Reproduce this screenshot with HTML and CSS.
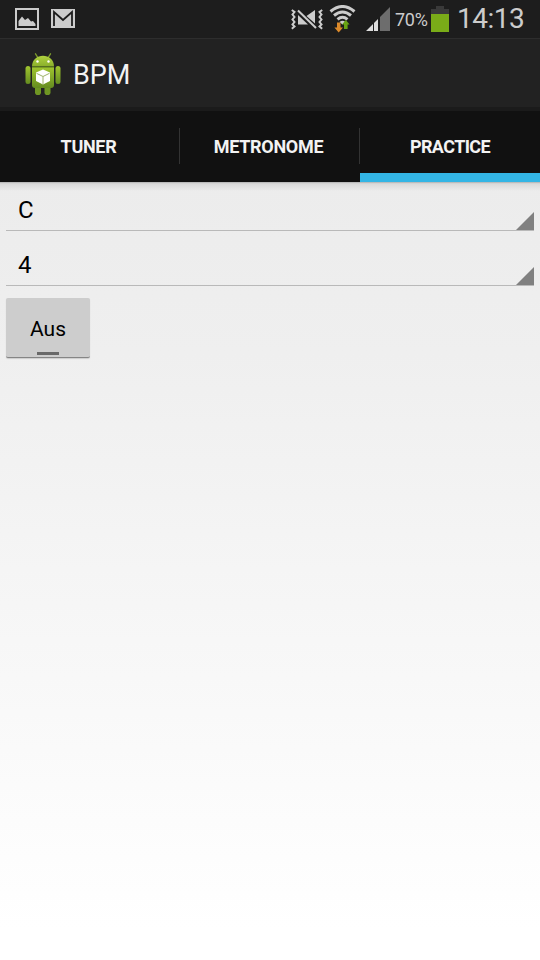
FILE: index.html
```
<!DOCTYPE html>
<html lang="de">
<head>
<meta charset="utf-8">
<title>BPM</title>
<link rel="stylesheet" href="styles.css">
</head>
<body>
<div class="screen">
  <header class="status">
    <div class="notices">
      <svg class="notice" width="24" height="22" viewBox="0 0 24 22"><path d="M1 1h22v20H1z" fill="none" stroke="#ccc" stroke-width="2"/><path d="M3.500 18v-5L7 8.500l3 3.500 3-2 3 3.500 2-.5 2.500 3v2z" fill="#ccc"/></svg>
      <svg class="notice gmail" width="24" height="19" viewBox="0 0 24 19"><path d="M0 0h24v19H0z" fill="#ccc"/><path d="M3 17V3l9 8 9-8v14" fill="none" stroke="#1d1d1d" stroke-width="1.800"/></svg>
    </div>
    <div class="system">
      <svg class="mute" width="32" height="24" viewBox="0 0 32 24"><path d="M.8 3l2.700 2-2 2.500 2 2.500-2 2.500 2 2.500-2 2.500 2 2-2.700 2.200M31.200 3l-2.700 2 2 2.500-2 2.500 2 2.500-2 2.500 2 2.500-2 2 2.700 2.200" fill="none" stroke="#ccc" stroke-width="2"/><path d="M7 8l10 9.500H7zM15.500 9L24 3v13.500z" fill="#ccc"/><path d="M7 3.500l18 17.500" stroke="#ccc" stroke-width="2"/></svg>
      <svg class="wifi" width="28" height="28" viewBox="0 0 28 28"><g fill="none" stroke="#ccc" stroke-width="3"><path d="M1.500 6.500Q13.500-3.500 25.500 6.500"/><path d="M5 10.500Q13.500 3.500 22 10.500"/><path d="M8.500 14.300Q13.500 10.300 18.500 14.300"/></g><path d="M10.500 17q3-2.500 6 0l-3 2.500z" fill="#ccc"/><path d="M8 17.500h3.500v5h2.500l-4.300 5-4.300-5H8z" fill="#dc8a2b"/><path d="M15 24v-4.500h-2L16.800 15l3.800 4.500h-2V24z" fill="#69a313"/></svg>
      <svg class="signal" width="24" height="24" viewBox="0 0 24 24"><path d="M0 24l7-7v7zM8 24v-8l4-4v12z" fill="#ddd"/><path d="M14 24V10L24 0v24z" fill="#6d6d6d"/></svg>
      <span class="percent">70%</span>
      <svg class="battery" width="18" height="26" viewBox="0 0 18 26"><path d="M0 3h5V0h8v3h5v5H0z" fill="#3a3a3a"/><path d="M0 8h18v18H0z" fill="#7aac18"/></svg>
      <span class="clock">14:13</span>
    </div>
  </header>
  <div class="appbar">
    <svg class="logo" width="36" height="43" viewBox="0 0 36 43">
      <defs>
        <linearGradient id="body" x2="0" y2="1"><stop stop-color="#a0c52f"/><stop offset="1" stop-color="#658c20"/></linearGradient>
        <linearGradient id="head" x2="0" y2="1"><stop stop-color="#b0d23f"/><stop offset="1" stop-color="#8aaf2b"/></linearGradient>
      </defs>
      <path d="M10.500.800l2.500 4M25.500.800l-2.500 4" stroke="#7d9c2c" stroke-width="1.300" stroke-linecap="round"/>
      <rect x=".5" y="13" width="5" height="18" rx="2.500" fill="url(#body)"/>
      <rect x="30.500" y="13" width="5" height="18" rx="2.500" fill="url(#body)"/>
      <rect x="10" y="30" width="6" height="12" rx="2.800" fill="#6f9623"/>
      <rect x="19.500" y="30" width="6" height="12" rx="2.800" fill="#6f9623"/>
      <path d="M7 14h22v18q0 3-3 3H10q-3 0-3-3z" fill="url(#body)"/>
      <path d="M7 13.500C7 -1 29 -1 29 13.500z" fill="url(#head)"/>
      <path d="M7 14h22" stroke="#55751b" stroke-width="1"/>
      <circle cx="12.500" cy="8.500" r="1.200" fill="#fff"/><circle cx="23.500" cy="8.500" r="1.200" fill="#fff"/>
      <path d="M18 16.500l7 3v8.500L18 31.500 11 28v-8.500z" fill="#fff"/>
      <path d="M11.500 20.300l6.500 3.200 6.500-3.200M18 23.500V31" fill="none" stroke="#9fb46b" stroke-width="1"/>
    </svg>
    <h1 class="title">BPM</h1>
  </div>
  <nav class="tabs">
    <a class="tab">TUNER</a>
    <a class="tab">METRONOME</a>
    <a class="tab active">PRACTICE</a>
  </nav>
  <main class="content">
    <div class="spinner first"><span>C</span><svg class="corner" width="18" height="18"><path d="M0 18L18 0v18z" fill="#808080"/></svg></div>
    <div class="spinner"><span>4</span><svg class="corner" width="18" height="18"><path d="M0 18L18 0v18z" fill="#808080"/></svg></div>
    <button class="toggle">Aus</button>
  </main>
</div>
</body>
</html>
```
FILE: styles.css
```
* { box-sizing: border-box; }
body { margin: 0; font-family: Roboto, sans-serif; }
.screen { width: 540px; height: 960px; display: flex; flex-direction: column; overflow: hidden; }
svg { display: block; flex: none; }
.status { height: 39px; flex: none; background: #1d1d1d; border-bottom: 1px solid #2d2d2d; display: flex; justify-content: space-between; padding: 0 16px 0 15px; color: #ccc; }
.notices, .system { display: flex; align-items: flex-start; }
.notices { gap: 12px; padding-top: 8px; }
.gmail { margin-top: 1px; }
.mute { margin-top: 7px; }
.wifi { margin: 5px 0 0 6px; }
.signal { margin: 7px 0 0 9px; }
.percent { width: 36px; margin-left: 5px; line-height: 40px; font-size: 18px; letter-spacing: -.3px; }
.battery { margin-top: 6px; }
.clock { width: 67px; margin-left: 8px; line-height: 38px; font-size: 28px; letter-spacing: -.5px; white-space: nowrap; }
.appbar { height: 72px; flex: none; background: #222; border-bottom: 4px solid #1b1b1b; display: flex; align-items: center; padding: 0 25px; }
.logo { margin-top: 2px; }
.title { margin: 3px 0 0 12px; color: #f3f3f3; font-size: 27px; line-height: 32px; font-weight: 400; }
.tabs { height: 71px; flex: none; background: #111; display: grid; grid-template-columns: repeat(3, 1fr); grid-template-rows: 71px; }
.tab { position: relative; display: flex; justify-content: center; padding-right: 3px; line-height: 72px; color: #f3f3f3; font-size: 18px; font-weight: 700; letter-spacing: -.3px; }
.tab:not(:last-child)::after { content: ""; position: absolute; right: 0; top: 17px; width: 1px; height: 36px; background: #333; }
.active { padding-right: 0; letter-spacing: -.6px; border-bottom: 9px solid #33b5e5; }
.content { flex: 1; padding: 0 6px; background: linear-gradient(#aaa 0, #cdcdcd 1px, #dadada 2px, #e5e5e500 9px), linear-gradient(#ececec, #efefef 22%, #fff 96%); }
.spinner { height: 55px; display: flex; align-items: flex-end; justify-content: space-between; padding-left: 12px; border-bottom: 1px solid #b9b9b9; color: #000; font-size: 24px; line-height: 39px; }
.first { height: 49px; }
.toggle { display: block; position: relative; width: 84px; height: 60px; margin: 12px 0 0; padding: 2px 0 0; border: 0; border-bottom: 1px solid #858585; border-radius: 2px; background: #cdcdcd; color: #000; font: 21px Roboto, sans-serif; box-shadow: 0 1px 1px #ccc; }
.toggle::after { content: ""; position: absolute; left: 31px; bottom: 2px; width: 22px; height: 3px; background: #696969; }
```
